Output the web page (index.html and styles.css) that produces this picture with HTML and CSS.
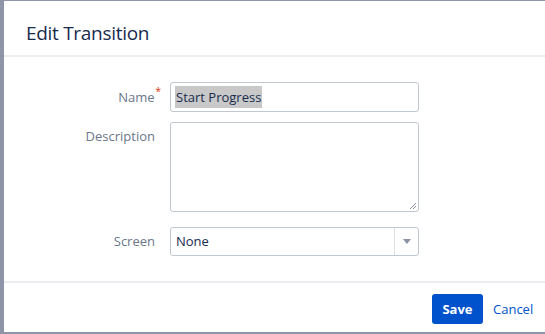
FILE: index.html
```html
<!DOCTYPE html>
<html lang="en">
<head>
  <meta charset="UTF-8">
  <title>Edit Transition</title>
  <link rel="stylesheet" href="styles.css">
</head>
<body>
<div class="dialog">
  <!-- Header -->
  <div class="dialog-header">
    <h2>Edit Transition</h2>
  </div>

  <!-- Form -->
  <div class="dialog-content">
    <div class="field-row">
      <label class="field-label">Name<span class="required">*</span></label>
      <div class="text-input"><span class="selected">Start Progress</span></div>
    </div>
    <div class="field-row desc-row">
      <label class="field-label">Description</label>
      <div class="textarea">
        <svg class="grip" width="8" height="8" viewBox="0 0 8 8"><path d="M7 1L1 7M7 4L4 7" stroke="#8a8f99" stroke-width="1" fill="none"/></svg>
      </div>
    </div>
    <div class="field-row screen-row">
      <label class="field-label">Screen</label>
      <div class="select">
        <span class="select-value">None</span>
        <span class="select-arrow"><svg width="8" height="5" viewBox="0 0 8 5"><path d="M0 0H8L4 5Z" fill="#8993a4"/></svg></span>
      </div>
    </div>
  </div>

  <!-- Footer -->
  <div class="dialog-footer">
    <button class="btn-save">Save</button>
    <a class="btn-cancel">Cancel</a>
  </div>
</div>
</body>
</html>
```

FILE: styles.css
```css
/* Edit transition dialog */
body {
  margin: 0;
  background-color: #8f95a8;
  font-family: "Open Sans", "Noto Sans", Arial, sans-serif;
  font-size: 13px;
  color: #172b4d;
  overflow: hidden;
}
.dialog {
  margin: 1px 0 0 4px;
  height: 331px;
  background: #fff;
  display: flex;
  flex-direction: column;
}
.dialog-header {
  height: 54px;
  border-bottom: 2px solid #ebecf0;
  padding-left: 22px;
  display: flex;
  align-items: center;
}
.dialog-header h2 {
  margin: 0;
  font-weight: normal;
  font-size: 19px;
  color: #172b4d;
  letter-spacing: -0.3px;
  padding-top: 10px;
}
.dialog-content {
  flex: 1;
  padding-top: 25px;
}
.field-row {
  display: flex;
  align-items: flex-start;
}
.field-label {
  width: 151px;
  text-align: right;
  color: #6b778c;
  line-height: 30px;
  box-sizing: border-box;
  flex: none;
}
.required {
  color: #de350b;
  font-size: 10px;
  vertical-align: top;
  line-height: 18px;
  margin-right: -6px;
  margin-left: 1px;
}
.text-input, .textarea, .select {
  width: 249px;
  box-sizing: border-box;
  border: 1px solid #c1c7d0;
  border-radius: 3px;
  background: #fff;
  margin-left: 15px;
}
.text-input {
  height: 30px;
  line-height: 28px;
  padding-left: 4px;
}
.selected {
  background: #c8c8c8;
  padding: 2px 1px;
}
.desc-row {
  margin-top: 10px;
}
.desc-row .field-label {
  line-height: 29px;
}
.textarea {
  height: 90px;
  position: relative;
}
.grip {
  position: absolute;
  right: 1px;
  bottom: 1px;
}
.screen-row {
  margin-top: 15px;
}
.screen-row .field-label {
  line-height: 29px;
}
.select {
  height: 29px;
  display: flex;
}
.select-value {
  flex: 1;
  padding-left: 5px;
  line-height: 27px;
}
.select-arrow {
  width: 23px;
  border-left: 1px solid #dfe1e6;
  display: flex;
  align-items: center;
  justify-content: center;
}
.dialog-footer {
  border-top: 2px solid #ebecf0;
  height: 49px;
  display: flex;
  align-items: center;
  padding-left: 428px;
}
.btn-save {
  width: 51px;
  height: 30px;
  background: #0052cc;
  color: #fff;
  border: none;
  border-radius: 3px;
  font-family: inherit;
  font-size: 13px;
  font-weight: bold;
  padding: 0;
  margin-top: 2px;
}
.btn-cancel {
  color: #0052cc;
  margin-left: 10px;
  margin-top: 2px;
}
```
